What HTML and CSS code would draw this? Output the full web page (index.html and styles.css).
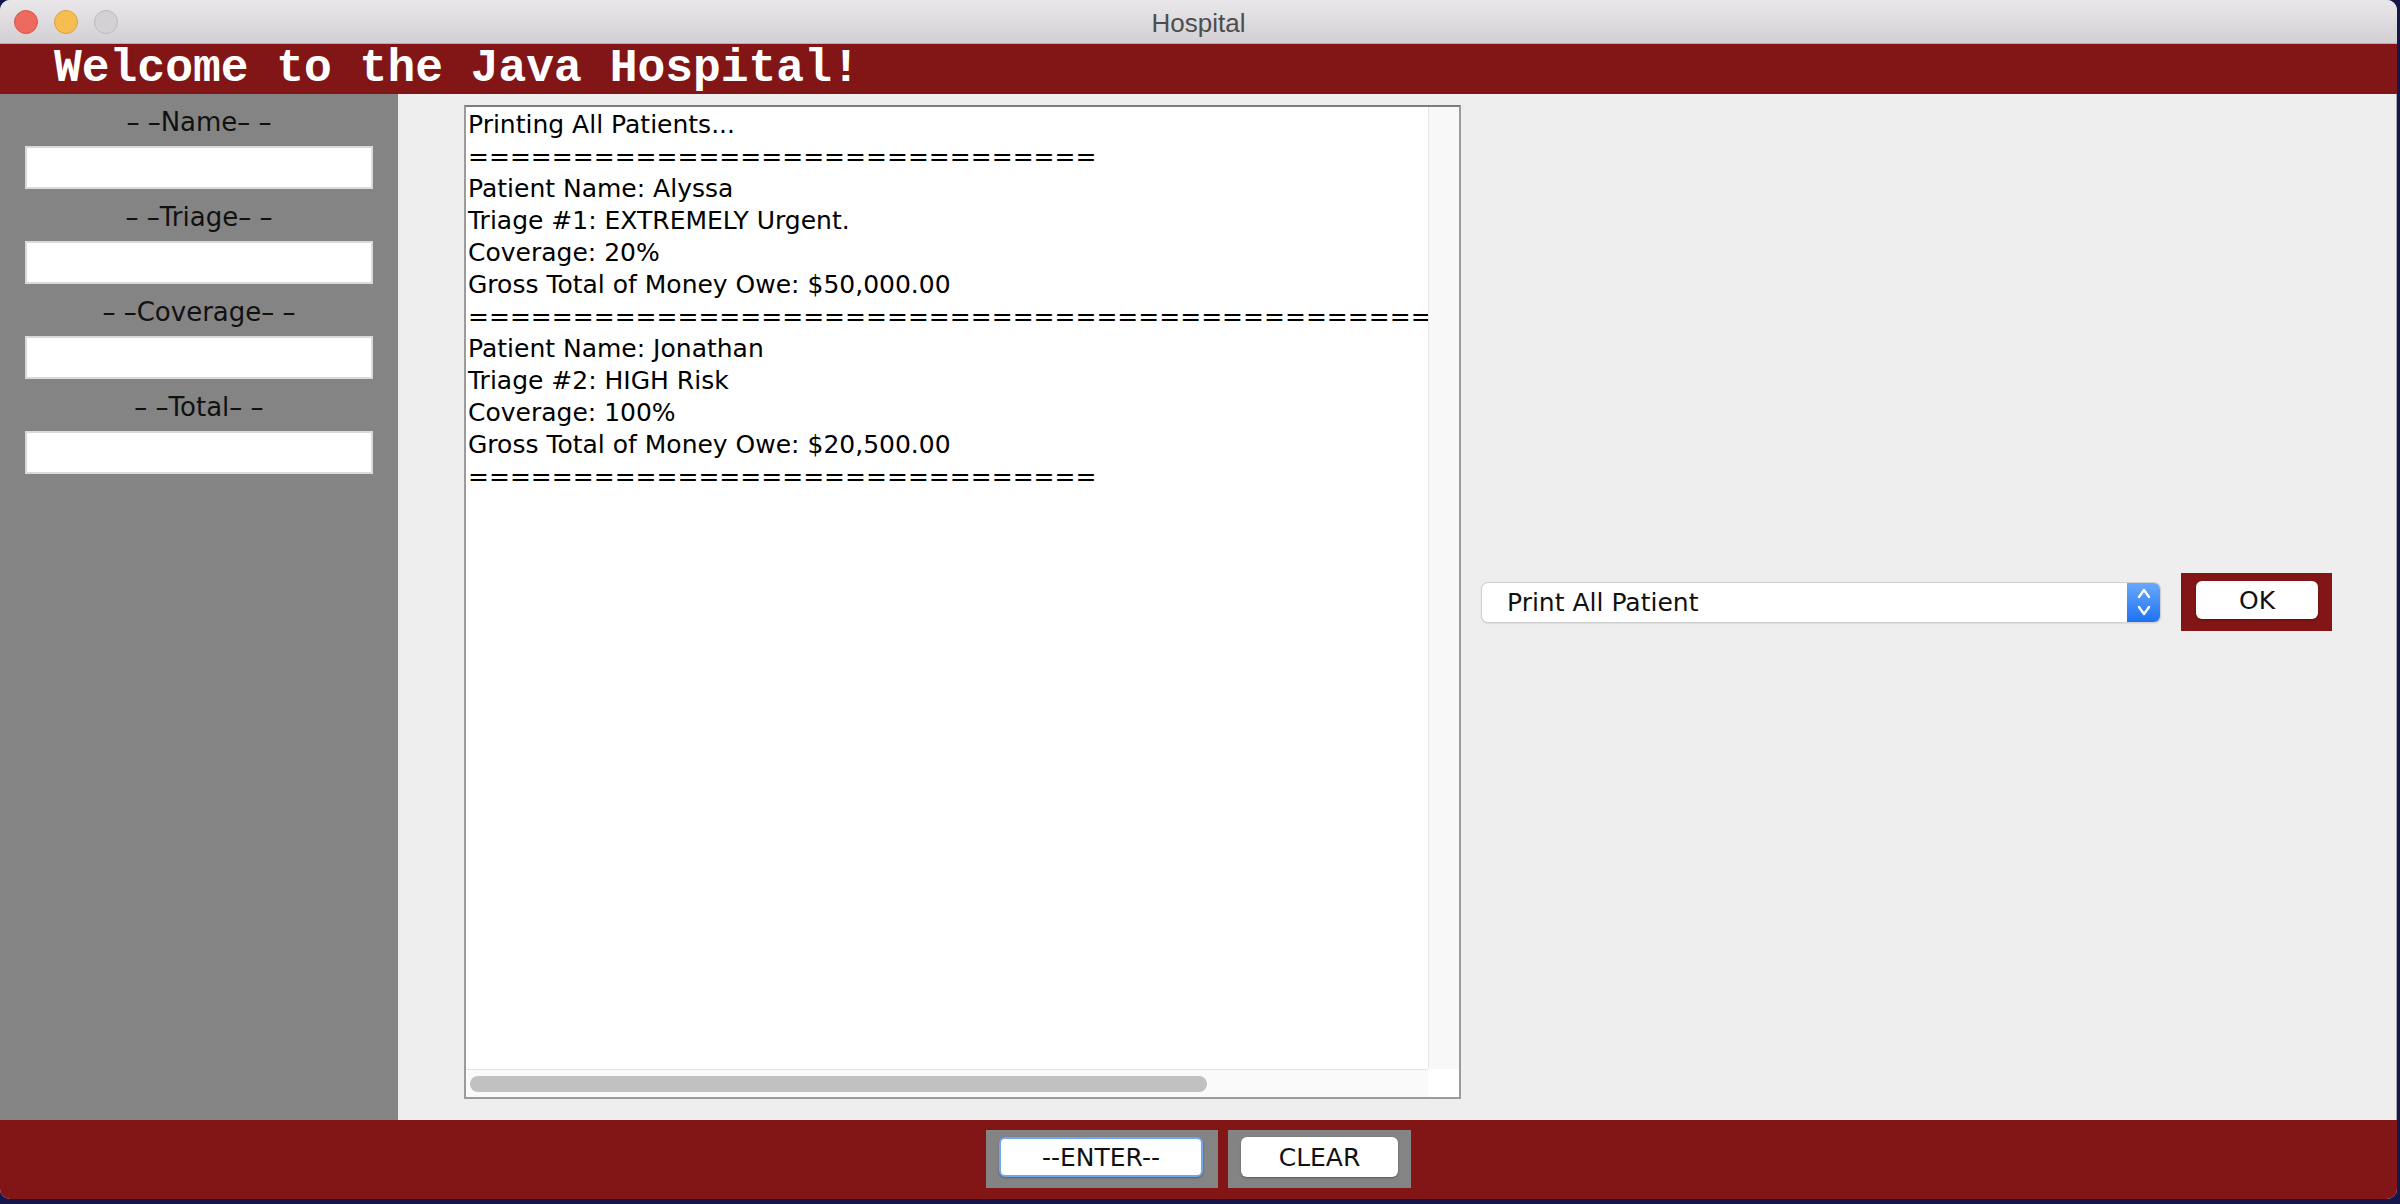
FILE: index.html
```html
<!DOCTYPE html>
<html>
<head>
<meta charset="utf-8">
<title>Hospital</title>
<link rel="stylesheet" href="styles.css">
</head>
<body>
<div class="window">
  <div class="titlebar">
    <div class="lights">
      <span class="light red"></span>
      <span class="light yellow"></span>
      <span class="light gray"></span>
    </div>
    <div class="title">Hospital</div>
  </div>
  <div class="header">Welcome to the Java Hospital!</div>
  <div class="main">
    <div class="side">
      <div class="label">– –Name– –</div>
      <div class="field"></div>
      <div class="label">– –Triage– –</div>
      <div class="field"></div>
      <div class="label">– –Coverage– –</div>
      <div class="field"></div>
      <div class="label">– –Total– –</div>
      <div class="field"></div>
    </div>
    <div class="center">
      <div class="textarea">
        <div class="content">Printing All Patients...
==============================
Patient Name: Alyssa
Triage #1: EXTREMELY Urgent.
Coverage: 20%
Gross Total of Money Owe: $50,000.00
==============================================================
Patient Name: Jonathan
Triage #2: HIGH Risk
Coverage: 100%
Gross Total of Money Owe: $20,500.00
==============================</div>
        <div class="vtrack"></div>
        <div class="htrack"><div class="thumb"></div></div>
        <div class="corner"></div>
      </div>
    </div>
    <div class="east">
      <div class="combo">
        <span class="combo-text">Print All Patient</span>
        <span class="combo-arrow">
          <svg width="18" height="34" viewBox="0 0 18 34"><path d="M4 12 L9 5 L14 12" fill="none" stroke="#fff" stroke-width="2.4" stroke-linecap="round" stroke-linejoin="round"/><path d="M4 22 L9 29 L14 22" fill="none" stroke="#fff" stroke-width="2.4" stroke-linecap="round" stroke-linejoin="round"/></svg>
        </span>
      </div>
      <div class="okbox"><div class="btn ok">OK</div></div>
    </div>
  </div>
  <div class="footer">
    <div class="btnbox enterbox"><div class="btn enter">--ENTER--</div></div>
    <div class="btnbox clearbox"><div class="btn clear">CLEAR</div></div>
  </div>
</div>
</body>
</html>
```

FILE: styles.css
```css
html, body {
  margin: 0;
  padding: 0;
}
body {
  width: 2400px;
  height: 1204px;
  background: #15164a;
  overflow: hidden;
  font-family: "DejaVu Sans", sans-serif;
}
.window {
  width: 2397px;
  height: 1199px;
  border-radius: 10px;
  overflow: hidden;
  display: flex;
  flex-direction: column;
  background: #eeeeee;
}
.titlebar {
  height: 43px;
  flex: none;
  background: linear-gradient(#e9e7e9, #d2d0d2);
  border-bottom: 1px solid #b2b0b2;
  display: flex;
  align-items: center;
  position: relative;
}
.lights {
  display: flex;
  gap: 16px;
  padding-left: 14px;
}
.light {
  width: 22px;
  height: 22px;
  border-radius: 50%;
  display: block;
}
.light.red { background: #ee6a5f; border: 1px solid #d6554b; }
.light.yellow { background: #f6be50; border: 1px solid #d9a13b; }
.light.gray { background: #d3d1d3; border: 1px solid #bcbabc; }
.title {
  position: absolute;
  left: 0;
  right: 0;
  top: 8px;
  text-align: center;
  font-family: "Liberation Sans", sans-serif;
  font-size: 26px;
  color: #4d4d4d;
}
.header {
  height: 50px;
  flex: none;
  background: #821515;
  color: #ffffff;
  font-family: "Liberation Mono", monospace;
  font-weight: bold;
  font-size: 46.3px;
  line-height: 50px;
  padding-left: 54px;
  white-space: pre;
}
.main {
  flex: 1;
  display: flex;
  min-height: 0;
}
.side {
  width: 398px;
  flex: none;
  background: #848484;
  display: flex;
  flex-direction: column;
  align-items: center;
  padding-top: 12px;
  box-sizing: border-box;
}
.label {
  height: 32px;
  line-height: 32px;
  font-size: 26px;
  color: #111;
  margin-bottom: 8px;
}
.field {
  width: 348px;
  height: 43px;
  box-sizing: border-box;
  background: #fff;
  border: 2px solid #dadada;
  margin-bottom: 12px;
}
.center {
  width: 1063px;
  flex: none;
  padding: 11px 0 21px 66px;
  box-sizing: border-box;
  display: flex;
}
.textarea {
  flex: 1;
  border: 2px solid #9b9b9b;
  border-top-color: #7d7d7d;
  background: #fff;
  display: grid;
  grid-template-columns: 1fr 31px;
  grid-template-rows: 1fr 28px;
}
.content {
  overflow: hidden;
  white-space: pre;
  font-size: 25px;
  line-height: 32px;
  color: #000;
  padding: 2px 0 0 2px;
}
.vtrack {
  background: #f8f8f8;
  border-left: 1px solid #e6e6e6;
}
.htrack {
  background: #fafafa;
  border-top: 1px solid #e4e4e4;
  padding: 6px 0 0 4px;
}
.thumb {
  width: 737px;
  height: 16px;
  border-radius: 8px;
  background: #c1c1c1;
}
.corner {
  background: #fff;
}
.east {
  flex: 1;
  display: flex;
  align-items: center;
  padding: 0 0 10px 21px;
  gap: 21px;
  border-right: 1px solid #a8a8a8;
}
.combo {
  width: 678px;
  height: 39px;
  box-sizing: border-box;
  background: #fff;
  border-radius: 6px;
  box-shadow: 0 0 0 1px #d0d0d0, 0 1px 2px rgba(0,0,0,0.25);
  display: flex;
  align-items: center;
  overflow: hidden;
}
.combo-text {
  flex: 1;
  font-size: 25px;
  color: #111;
  padding-left: 25px;
}
.combo-arrow {
  width: 33px;
  height: 39px;
  background: linear-gradient(#69a9fb, #1d72f3);
  display: flex;
  align-items: center;
  justify-content: center;
}
.okbox {
  background: #821515;
  padding: 8px 14px 12px 15px;
}
.btn {
  background: #fff;
  border-radius: 6px;
  box-shadow: 0 1px 2px rgba(0,0,0,0.3);
  font-size: 25px;
  color: #111;
  display: flex;
  align-items: center;
  justify-content: center;
}
.btn.ok {
  width: 122px;
  height: 38px;
}
.footer {
  height: 79px;
  flex: none;
  background: #821515;
  display: flex;
  justify-content: center;
  align-items: center;
  gap: 10px;
  padding-bottom: 1px;
  box-sizing: border-box;
}
.btnbox {
  background: #848484;
  height: 58px;
  box-sizing: border-box;
  padding: 7px 13px 0 13px;
}
.enterbox { width: 232px; }
.clearbox { width: 183px; }
.btn.enter {
  width: 204px;
  height: 40px;
  box-sizing: border-box;
  border: 2px solid #72a7ef;
}
.btn.clear {
  width: 157px;
  height: 40px;
}
```
